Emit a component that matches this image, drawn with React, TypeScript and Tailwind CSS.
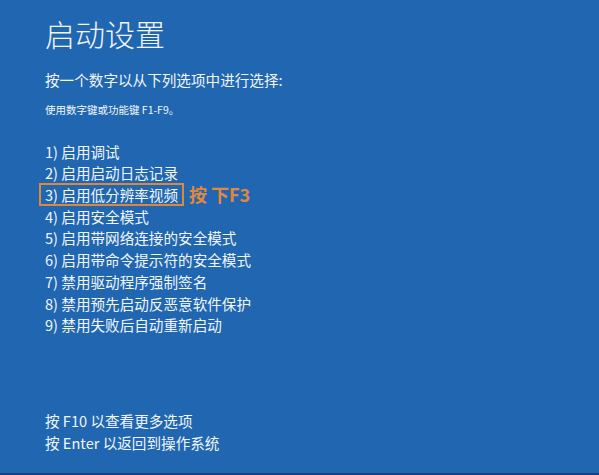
const options = [
  '1) 启用调试',
  '2) 启用启动日志记录',
  '3) 启用低分辨率视频',
  '4) 启用安全模式',
  '5) 启用带网络连接的安全模式',
  '6) 启用带命令提示符的安全模式',
  '7) 禁用驱动程序强制签名',
  '8) 禁用预先启动反恶意软件保护',
  '9) 禁用失败后自动重新启动',
];

const font = { fontFamily: '"Noto Sans CJK SC", "Noto Sans", sans-serif' };

export default function App() {
  return (
    <div
      className="relative h-[475px] w-full overflow-hidden bg-[#2066b0] text-[#f2f6fb] border-b-2 border-[#11407c]"
      style={font}
    >
      <div className="pl-[45px] pt-[15px]">
        <h1 className="text-[30px] leading-[36px] font-light">启动设置</h1>

        <p className="mt-[18px] text-[14.6px] leading-[21.7px]">按一个数字以从下列选项中进行选择:</p>
        <p className="mt-[11px] text-[10.5px] leading-[16px]">使用数字键或功能键 F1-F9。</p>

        <ul className="mt-[23px] text-[14.6px]">
          {options.map((opt, i) =>
            i === 2 ? (
              <li key={opt} className="flex h-[21.7px] items-center">
                <span className="-ml-[6px] border-2 border-[#e0873a] px-[4px] leading-[19px]">{opt}</span>
                <span className="ml-[5px] text-[18px] font-bold text-[#e0883e]">
                  <span className="mr-[4px]">按</span>下F3
                </span>
              </li>
            ) : (
              <li key={opt} className="h-[21.7px] leading-[21.7px]">
                {opt}
              </li>
            ),
          )}
        </ul>

        <div className="mt-[74px] text-[14.6px] leading-[22px]">
          <p>按 F10 以查看更多选项</p>
          <p>按 Enter 以返回到操作系统</p>
        </div>
      </div>
    </div>
  );
}
